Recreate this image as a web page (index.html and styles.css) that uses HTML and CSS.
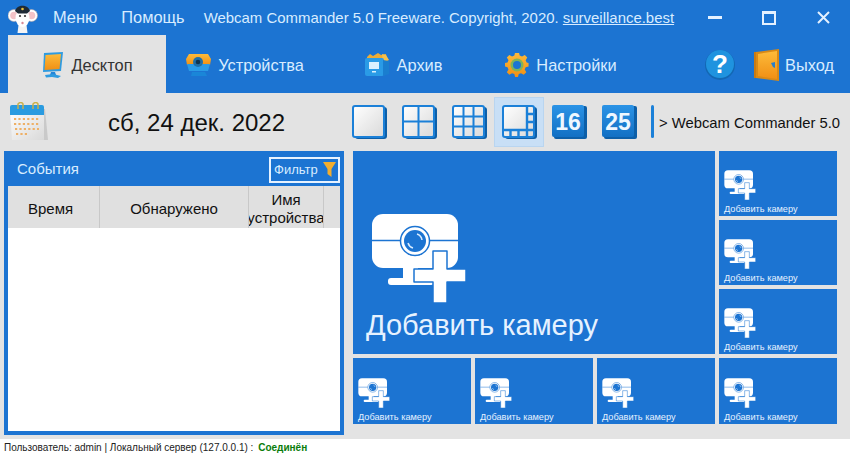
FILE: index.html
```html
<!DOCTYPE html>
<html lang="ru">
<head>
    <meta charset="UTF-8">
    <meta name="viewport" content="width=device-width, initial-scale=1.0">
    <title>Webcam Commander 5.0</title>
    <link rel="stylesheet" href="styles.css">
</head>
<body>
    <!-- shared gradients and the camera / layout drawings -->
    <svg class="defs" width="0" height="0">
        <defs>
            <linearGradient id="paper" x1="0" y1="0" x2="1" y2="1">
                <stop offset="0" stop-color="#ffffff"/>
                <stop offset="1" stop-color="#d9d9d9"/>
            </linearGradient>
            <linearGradient id="orange" x1="0" y1="0" x2="0" y2="1">
                <stop offset="0" stop-color="#fdbb3a"/>
                <stop offset="1" stop-color="#f08f14"/>
            </linearGradient>
            <linearGradient id="tile" x1="0" y1="0" x2="0" y2="1">
                <stop offset="0" stop-color="#2b93e6"/>
                <stop offset="1" stop-color="#1270c4"/>
            </linearGradient>
            <symbol id="addcam" viewBox="0 0 94 90">
                <path d="M31 52h15v15H31z" fill="#fff"/>
                <rect x="16" y="65" width="46" height="7" rx="3" fill="#fff"/>
                <rect x="0" y="1" width="86" height="54" rx="11" fill="#fff"/>
                <path d="M0 27.500h86" stroke="#1c74d2" stroke-width="1.500"/>
                <circle cx="43" cy="28" r="14.500" fill="#fff" stroke="#1c74d2" stroke-width="1.500"/>
                <circle cx="43" cy="28" r="11" fill="#1c74d2"/>
                <path d="M45 21a7.500 7.500 0 0 1 5 6M36 30a7.500 7.500 0 0 0 5 5" fill="none" stroke="#d9ecff" stroke-width="1.500"/>
                <path d="M61 38h14v18h19v13H75v21H61V69H42V56h19z" fill="#fff" stroke="#1c74d2" stroke-width="1.500" stroke-linejoin="round"/>
            </symbol>
            <symbol id="frame" viewBox="0 0 35 34">
                <rect x="3" y="2" width="32" height="32" rx="3" fill="#0d5fa8"/>
                <rect x="1" y="1" width="31" height="31" rx="2" fill="url(#paper)" stroke="#1b80d8" stroke-width="2"/>
            </symbol>
        </defs>
    </svg>

    <header class="titlebar">
        <svg class="mascot" width="30" height="30" viewBox="0 0 30 30">
            <circle cx="6" cy="12.500" r="6" fill="#fff" stroke="#b9a9a9" stroke-width=".6"/>
            <circle cx="6" cy="12.500" r="3.800" fill="#f3c3c8"/>
            <circle cx="23.500" cy="12.500" r="6" fill="#fff" stroke="#b9a9a9" stroke-width=".6"/>
            <circle cx="23.500" cy="12.500" r="3.800" fill="#f3c3c8"/>
            <path d="M10.500 22h8l1 8h-10z" fill="#f4f4f4"/>
            <ellipse cx="14.500" cy="15" rx="7" ry="9" fill="#fff"/>
            <path d="M7 8C9 1 20 1 22 8l-3 2.500h-9z" fill="#1e2a35"/>
            <circle cx="14.500" cy="6" r="1.300" fill="#e9c33c"/>
            <circle cx="12" cy="13" r="1.100" fill="#333"/>
            <circle cx="17" cy="13" r="1.100" fill="#333"/>
            <circle cx="14.500" cy="20" r="1.200" fill="#d88a96"/>
        </svg>
        <span class="menu-item first">Меню</span>
        <span class="menu-item">Помощь</span>
        <span class="app-title">Webcam Commander 5.0 Freeware. Copyright, 2020. <a href="#">surveillance.best</a></span>
        <div class="window-controls">
            <span class="win-btn"><i class="win-min"></i></span>
            <span class="win-btn"><i class="win-max"></i></span>
            <span class="win-btn">
                <svg width="13" height="13" viewBox="0 0 13 13"><path d="M1 1l11 11M12 1L1 12" stroke="#e4f1ff" stroke-width="2"/></svg>
            </span>
        </div>
    </header>

    <nav class="tabs">
        <a class="tab active" href="#">
            <svg width="23" height="26" viewBox="0 0 23 26">
                <path d="M3 1l19-1-2 19-18 1z" fill="#2f9be0"/>
                <path d="M4.500 3l15.500-1-1.500 15-15 1z" fill="url(#orange)"/>
                <path d="M10 20h4l1 3h-6z" fill="#2486d8"/>
                <path d="M4 23l8-1 8 2-3 2-6-1-6 .5z" fill="#2f9be0"/>
            </svg>
            Десктоп
        </a>
        <a class="tab" href="#">
            <svg width="25" height="24" viewBox="0 0 25 24">
                <path d="M3 1h19l3 5-1 6H1L0 6z" fill="url(#orange)"/>
                <path d="M1 11h23l-2 7H3z" fill="#2a9be6"/>
                <path d="M6 19h13l2 4H5z" fill="#1a86d8"/>
                <circle cx="12" cy="9" r="5" fill="#1f6fa8"/>
                <circle cx="12" cy="9" r="2.300" fill="#0f3552"/>
            </svg>
            Устройства
        </a>
        <a class="tab" href="#">
            <svg width="26" height="24" viewBox="0 0 26 24">
                <path d="M3 4l3-3 3 2 5-3 3 2 5-1 1 8H3z" fill="#eeac35"/>
                <path d="M18 1l4 1 3 5-6 3z" fill="#f5c04c"/>
                <rect x="1" y="5" width="19" height="18" rx="2" fill="#2a9be6"/>
                <path d="M19 7l6 1v13l-6 2z" fill="#1a7ecf"/>
                <rect x="5" y="9" width="10" height="7" fill="#d9f0ff"/>
                <path d="M8 18h4v1.500H8z" fill="#d9f0ff"/>
            </svg>
            Архив
        </a>
        <a class="tab" href="#">
            <svg width="24" height="24" viewBox="0 0 24 24">
                <path d="M10 0h4l.8 3.200 2.400 1 2.900-1.700 2.600 2.700-1.700 2.800 1 2.400L24 11v3.600l-3 .8-1 2.400 1.700 2.800-2.700 2.600-2.800-1.700-2.400 1-.8 3H10l-.8-3-2.400-1L4 23.200l-2.600-2.600 1.700-2.800-1-2.400-3-.8V11l3-.6 1-2.400L1.400 5.200 4 2.500l2.800 1.700 2.400-1z" transform="translate(.5 -.5) scale(.96)" fill="url(#orange)"/>
                <circle cx="12" cy="12" r="6.500" fill="#7fb35a"/>
                <circle cx="12" cy="12" r="4" fill="#1c74d2"/>
            </svg>
            Настройки
        </a>
        <div class="tab-tools">
            <svg class="help" width="30" height="30" viewBox="0 0 30 30">
                <circle cx="15" cy="15" r="15" fill="#1368b4"/>
                <circle cx="15" cy="14" r="14" fill="#1f93df"/>
                <text x="15" y="23" text-anchor="middle" class="help-mark">?</text>
            </svg>
            <a class="exit" href="#">
                <svg width="26" height="32" viewBox="0 0 26 32">
                    <path d="M0 3h3v26H0z" fill="#c97a12"/>
                    <path d="M2 3L25 0v32L2 29z" fill="#d98a16"/>
                    <path d="M4 5l19-3v28L4 27z" fill="url(#orange)"/>
                    <path d="M17 14l4-1v6l-2-1z" fill="#2a7fc8"/>
                </svg>
                Выход
            </a>
        </div>
    </nav>

    <section class="toolbar">
        <svg class="calendar" width="40" height="40" viewBox="0 0 40 40">
            <path d="M3 7h33l3 31H4z" fill="#c9c9c9"/>
            <path d="M1 7h34v31H3z" fill="url(#paper)"/>
            <path d="M1 5q0-2 2-2h30q2 0 2 2v8H1z" fill="#2a9be0"/>
            <path d="M9 7V2q3-3 5 0v5M24 7V2q3-3 5 0v5" fill="none" stroke="#c9b04a" stroke-width="1.500"/>
            <path d="M5 17h26M5 22h26M6 27h24M7 32h12" stroke="#eeb066" stroke-width="2.200" stroke-dasharray="2.200 2.200"/>
        </svg>
        <div class="date">сб, 24 дек. 2022</div>
        <div class="layouts">
            <span class="layout-btn"><svg width="35" height="34"><use href="#frame"/></svg></span>
            <span class="layout-btn">
                <svg width="35" height="34" viewBox="0 0 35 34">
                    <use href="#frame" width="35" height="34"/>
                    <path d="M16.500 1v31M1 16.500h31" stroke="#1b80d8" stroke-width="2"/>
                </svg>
            </span>
            <span class="layout-btn">
                <svg width="35" height="34" viewBox="0 0 35 34">
                    <use href="#frame" width="35" height="34"/>
                    <path d="M11.500 1v31M21.500 1v31M1 11.500h31M1 21.500h31" stroke="#1b80d8" stroke-width="2"/>
                </svg>
            </span>
            <span class="layout-btn selected">
                <svg width="35" height="34" viewBox="0 0 35 34">
                    <use href="#frame" width="35" height="34"/>
                    <path d="M25 1v31M1 25h31M25 9h7M25 17h7M8.500 25v7M16.500 25v7" stroke="#1b80d8" stroke-width="2.400"/>
                </svg>
            </span>
            <span class="layout-btn number">
                <svg width="35" height="34" viewBox="0 0 35 34">
                    <rect x="2" y="1" width="33" height="33" rx="2" fill="#0d5fa8"/>
                    <rect x="0" y="0" width="32" height="32" rx="2" fill="url(#tile)"/>
                    <text x="16" y="25" text-anchor="middle" class="layout-count">16</text>
                </svg>
            </span>
            <span class="layout-btn number">
                <svg width="35" height="34" viewBox="0 0 35 34">
                    <rect x="2" y="1" width="33" height="33" rx="2" fill="#0d5fa8"/>
                    <rect x="0" y="0" width="32" height="32" rx="2" fill="url(#tile)"/>
                    <text x="16" y="25" text-anchor="middle" class="layout-count">25</text>
                </svg>
            </span>
        </div>
        <i class="separator"></i>
        <div class="crumb">&gt; Webcam Commander 5.0</div>
    </section>

    <main class="workspace">
        <section class="events">
            <div class="events-head">
                <span class="events-title">События</span>
                <button class="filter">
                    Фильтр
                    <svg width="13" height="15" viewBox="0 0 13 15"><path d="M0 0h13L8.500 7v8L4.500 12V7z" fill="#f2ad2e"/></svg>
                </button>
            </div>
            <div class="events-cols">
                <div class="col col-time">Время</div>
                <div class="col">Обнаружено</div>
                <div class="col"><span>Имя</span><span>устройства</span></div>
                <div class="col"></div>
            </div>
            <div class="events-body"></div>
        </section>

        <section class="cameras">
            <a class="cam cam-big" href="#">
                <svg width="94" height="90"><use href="#addcam"/></svg>
                <span>Добавить камеру</span>
            </a>
            <a class="cam" href="#"><svg width="32" height="30"><use href="#addcam"/></svg><span>Добавить камеру</span></a>
            <a class="cam" href="#"><svg width="32" height="30"><use href="#addcam"/></svg><span>Добавить камеру</span></a>
            <a class="cam" href="#"><svg width="32" height="30"><use href="#addcam"/></svg><span>Добавить камеру</span></a>
            <a class="cam" href="#"><svg width="32" height="30"><use href="#addcam"/></svg><span>Добавить камеру</span></a>
            <a class="cam" href="#"><svg width="32" height="30"><use href="#addcam"/></svg><span>Добавить камеру</span></a>
            <a class="cam" href="#"><svg width="32" height="30"><use href="#addcam"/></svg><span>Добавить камеру</span></a>
            <a class="cam" href="#"><svg width="32" height="30"><use href="#addcam"/></svg><span>Добавить камеру</span></a>
        </section>
    </main>

    <footer class="status">Пользователь: admin | Локальный сервер (127.0.0.1) : <b>Соединён</b></footer>
</body>
</html>
```

FILE: styles.css
```css
body {
    margin: 0;
    width: 850px;
    height: 456px;
    overflow: hidden;
    font-family: "Liberation Sans", Arial, sans-serif;
    background-color: #fff;
    color: #111;
}
a {
    color: inherit;
    text-decoration: none;
}
.defs {
    display: block;
}

/* title bar */
.titlebar {
    display: flex;
    align-items: center;
    height: 35px;
    padding-left: 8px;
    background-color: #1c74d2;
    color: #d8ecff;
    font-size: 14.950px;
}
.mascot {
    flex: none;
}
.menu-item {
    margin-left: 24px;
    font-size: 16.400px;
}
.menu-item.first {
    margin-left: 15px;
}
.app-title {
    margin-left: 19px;
    white-space: nowrap;
}
.app-title a {
    text-decoration: underline;
}
.window-controls {
    display: flex;
    margin-left: auto;
}
.win-btn {
    display: flex;
    align-items: center;
    justify-content: center;
    width: 54px;
    height: 35px;
}
.win-min {
    width: 14px;
    height: 3px;
    background-color: #e4f1ff;
}
.win-max {
    width: 10px;
    height: 9px;
    border: 2px solid #e4f1ff;
    border-top-width: 3px;
}

/* tabs */
.tabs {
    display: flex;
    height: 58px;
    padding: 0 16px 0 8px;
    background-color: #1c74d2;
    color: #d8ecff;
    font-size: 16.400px;
}
.tab {
    display: flex;
    align-items: center;
    justify-content: center;
    gap: 7px;
    width: 158px;
    padding-top: 2px;
    box-sizing: border-box;
}
.tab.active {
    background-color: #e3e3e3;
    color: #333;
}
.tab-tools {
    display: flex;
    align-items: center;
    gap: 19px;
    margin-left: auto;
    padding-top: 2px;
}
.help-mark {
    fill: #fff;
    font-size: 26px;
    font-weight: bold;
}
.exit {
    display: flex;
    align-items: center;
    gap: 5px;
}

/* toolbar */
.toolbar {
    display: flex;
    align-items: center;
    box-sizing: border-box;
    height: 55px;
    padding: 2px 0 0 9px;
    background-color: #e3e3e3;
}
.calendar {
    flex: none;
}
.date {
    width: 236px;
    margin: 2px 0 0 59px;
    font-size: 24px;
    white-space: nowrap;
}
.layouts {
    display: flex;
}
.layout-btn {
    display: flex;
    align-items: center;
    justify-content: center;
    box-sizing: border-box;
    width: 50px;
    height: 50px;
}
.layout-btn.selected {
    background-color: #c8dff6;
    border: 1px solid #b9d5f0;
}
.layout-count {
    fill: #eef7ff;
    font-size: 23px;
    font-weight: bold;
}
.separator {
    width: 3px;
    height: 33px;
    margin-left: 7px;
    border-radius: 2px;
    background-color: #1b80d8;
}
.crumb {
    margin: 2px 0 0 5px;
    font-size: 14.800px;
    white-space: nowrap;
}

/* main area */
.workspace {
    display: flex;
    gap: 9px;
    height: 291px;
    box-sizing: border-box;
    padding: 3px 13px 4px 4px;
    background-color: #e3e3e3;
}
.events {
    display: flex;
    flex-direction: column;
    box-sizing: border-box;
    width: 340px;
    height: 284px;
    border: 4px solid #1c74d2;
    border-top: 0;
}
.events-head {
    display: flex;
    align-items: center;
    justify-content: space-between;
    flex: none;
    height: 35px;
    background-color: #1c74d2;
    color: #d8ecff;
}
.events-title {
    margin-left: 9px;
    font-size: 15px;
}
.filter {
    display: flex;
    align-items: center;
    justify-content: space-between;
    box-sizing: border-box;
    width: 71px;
    height: 26px;
    margin-top: 2px;
    padding: 0 2px 0 3px;
    border: 2px solid #e6f2ff;
    background-color: #1c74d2;
    color: #d8ecff;
    font-family: inherit;
    font-size: 13px;
}
.events-cols {
    display: grid;
    grid-template-columns: 92px 149px 75px 1fr;
    flex: none;
    height: 42px;
    background-color: #e0e0e0;
    font-size: 15px;
}
.col {
    display: flex;
    flex-direction: column;
    align-items: center;
    justify-content: center;
    box-sizing: border-box;
    overflow: hidden;
    padding-top: 3px;
    border-right: 1px solid #c8c8c8;
    line-height: 18px;
    white-space: nowrap;
}
.col-time {
    padding-right: 6px;
}
.col:last-child {
    border-right: 0;
}
.col span {
    flex: none;
}
.events-body {
    flex: 1;
    background-color: #fff;
}

/* camera tiles */
.cameras {
    display: grid;
    grid-template-columns: repeat(4, 118px);
    grid-template-rows: 65px 65px 65px 66px;
    gap: 4px;
    align-self: flex-start;
}
.cam {
    display: flex;
    flex-direction: column;
    justify-content: flex-end;
    gap: 4px;
    padding: 0 0 2px 5px;
    background-color: #1c74d2;
    color: #e6f2ff;
    font-size: 9.200px;
    white-space: nowrap;
}
.cam-big {
    grid-column: 1 / 4;
    grid-row: 1 / 4;
    gap: 6px;
    padding: 0 0 12px 13px;
    font-size: 29px;
}
.cam-big svg {
    margin-left: 6px;
}

/* status line */
.status {
    height: 17px;
    padding-left: 4px;
    font-size: 10px;
    line-height: 17px;
    color: #222;
}
.status b {
    margin-left: 2px;
    color: #0a7d0a;
}
```
